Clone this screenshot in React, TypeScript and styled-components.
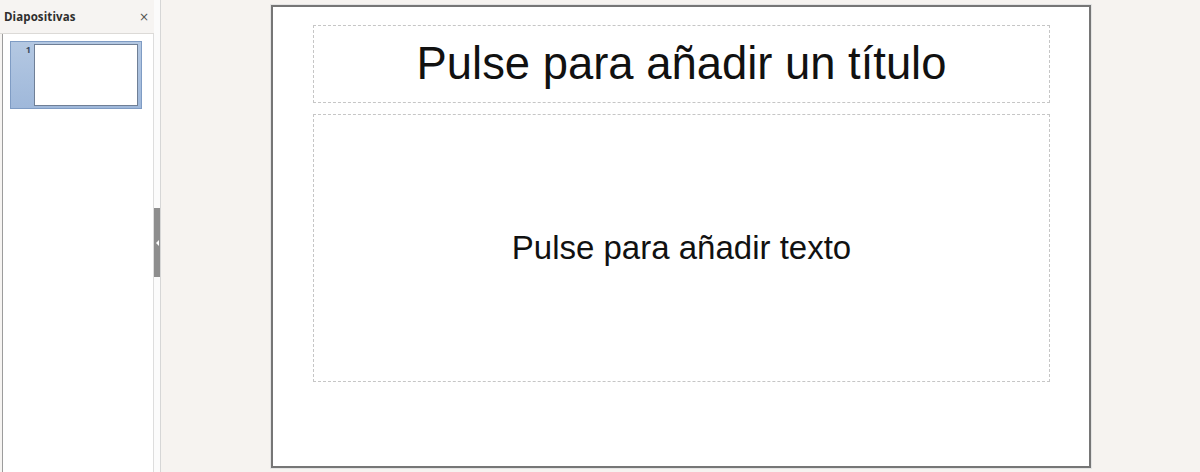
import React from "react";
import styled, { createGlobalStyle } from "styled-components";

const Global = createGlobalStyle`
  html, body { margin: 0; padding: 0; background: #f6f3f0; }
  #root { width: 1200px; height: 472px; overflow: hidden; }
`;

const Window = styled.div`
  display: flex;
  width: 1200px;
  height: 472px;
  background: #f6f3f0;
`;

const Sidebar = styled.aside`
  width: 154px;
  display: flex;
  flex-direction: column;
  background: #f6f4f2;
`;

const PanelHeader = styled.div`
  height: 34px;
  display: flex;
  align-items: center;
  justify-content: space-between;
  padding: 0 5px 0 4px;
  box-sizing: border-box;
  border-bottom: 1px solid #dcdad7;
`;

const PanelTitle = styled.span`
  font-family: "Open Sans", "DejaVu Sans", sans-serif;
  font-weight: 700;
  font-size: 11.5px;
  color: #2e2e2e;
  letter-spacing: 0.1px;
`;

const CloseButton = styled.span`
  font-family: "DejaVu Sans", sans-serif;
  font-size: 12px;
  color: #555;
  line-height: 1;
`;

const SlideList = styled.div`
  flex: 1;
  margin-left: 2px;
  border-left: 1px solid #9c9c9c;
  border-right: 1px solid #dddddd;
  background: #ffffff;
  padding: 7px 0 0 7px;
`;

const ThumbRow = styled.div<{ $selected?: boolean }>`
  width: 132px;
  height: 68px;
  display: flex;
  box-sizing: border-box;
  border: 1px solid #7f9cc4;
  background: ${(p) =>
    p.$selected ? "linear-gradient(#b4c8e2, #9fb8da)" : "transparent"};
`;

const ThumbNumber = styled.div`
  width: 23px;
  box-sizing: border-box;
  padding: 1px 3px 0 0;
  text-align: right;
  font-family: "Open Sans", "DejaVu Sans", sans-serif;
  font-weight: 700;
  font-size: 9px;
  color: #3a4a60;
`;

const ThumbPage = styled.div`
  width: 104px;
  height: 62px;
  margin-top: 2px;
  box-sizing: border-box;
  background: #ffffff;
  border: 1px solid #6f7f96;
`;

const SplitterColumn = styled.div`
  width: 7px;
  display: flex;
  align-items: flex-start;
  background: #fbfbfb;
  border-right: 1px solid #d6d6d6;
  box-sizing: border-box;
  padding-top: 208px;
`;

const SplitterHandle = styled.div`
  width: 6px;
  height: 69px;
  background: #8e8e8e;
  display: flex;
  align-items: center;
  justify-content: center;
`;

const Arrow = styled.div`
  width: 0;
  height: 0;
  border-top: 3px solid transparent;
  border-bottom: 3px solid transparent;
  border-right: 3px solid #ffffff;
`;

const Workspace = styled.main`
  flex: 1;
  padding: 5px 0 0 110px;
  background: #f6f3f0;
`;

const Slide = styled.div`
  width: 820px;
  height: 463px;
  box-sizing: border-box;
  background: #ffffff;
  border: 2px solid #767676;
  box-shadow: 0 0 0 1px #e4e4e4;
  padding: 18px 0 0 40px;
  display: flex;
  flex-direction: column;
  gap: 11px;
`;

const Placeholder = styled.div<{ $height: number; $size: number }>`
  width: 737px;
  height: ${(p) => p.$height}px;
  box-sizing: border-box;
  border: 1px dashed #c6c6c6;
  display: flex;
  align-items: center;
  justify-content: center;
  font-family: "Liberation Sans", Arial, sans-serif;
  font-size: ${(p) => p.$size}px;
  color: #111111;
`;

export default function App() {
  return (
    <>
      <Global />
      <Window>
        <Sidebar>
          <PanelHeader>
            <PanelTitle>Diapositivas</PanelTitle>
            <CloseButton>×</CloseButton>
          </PanelHeader>
          <SlideList>
            <ThumbRow $selected>
              <ThumbNumber>1</ThumbNumber>
              <ThumbPage />
            </ThumbRow>
          </SlideList>
        </Sidebar>
        <SplitterColumn>
          <SplitterHandle>
            <Arrow />
          </SplitterHandle>
        </SplitterColumn>
        <Workspace>
          <Slide>
            <Placeholder $height={78} $size={45.4}>
              Pulse para añadir un título
            </Placeholder>
            <Placeholder $height={268} $size={33}>
              Pulse para añadir texto
            </Placeholder>
          </Slide>
        </Workspace>
      </Window>
    </>
  );
}
